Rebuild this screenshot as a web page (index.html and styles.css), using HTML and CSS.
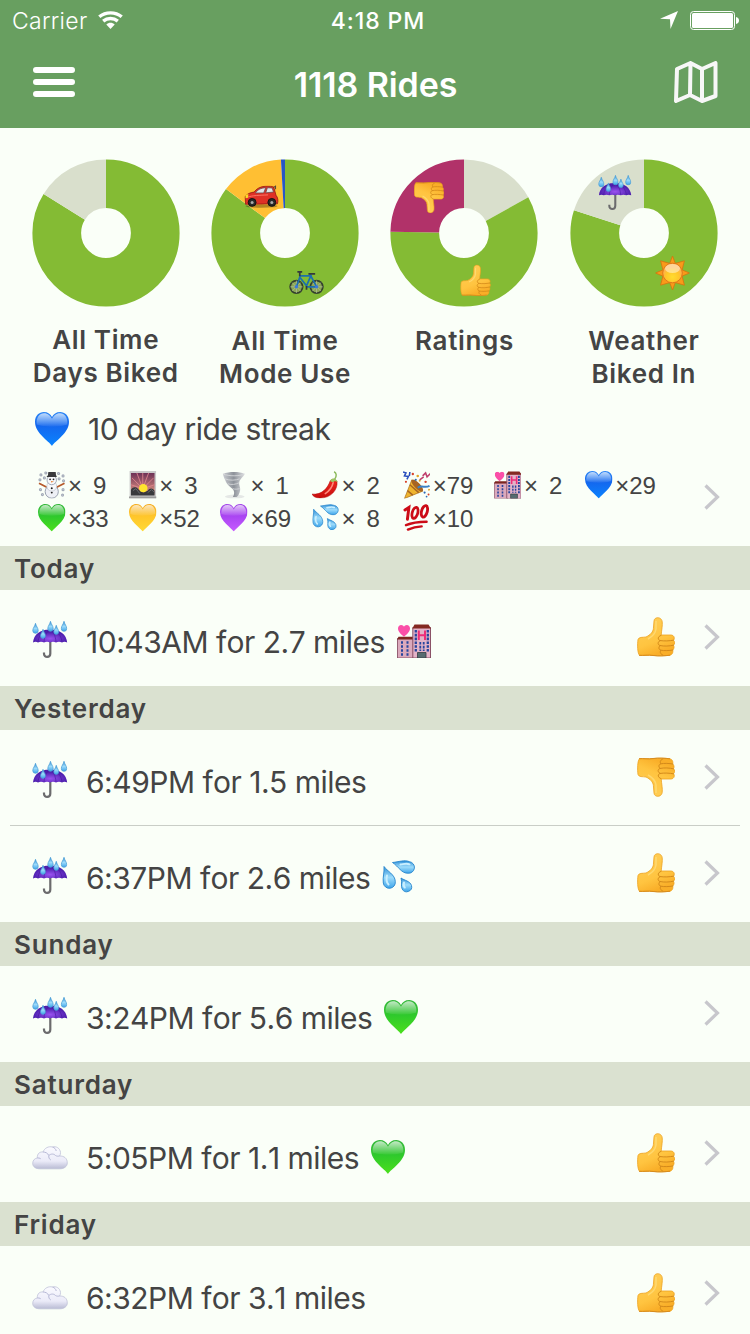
FILE: index.html
```html
<!DOCTYPE html>
<html lang="en">
<head>
<meta charset="utf-8">
<title>Rides</title>
<link rel="stylesheet" href="styles.css">
</head>
<body>
<svg class="defs" width="0" height="0" aria-hidden="true">
  <defs>
    <linearGradient id="blue" x2="0" y2="1"><stop offset="0" stop-color="#2c86f5"/><stop offset=".4" stop-color="#1467ee"/><stop offset="1" stop-color="#0a84ff"/></linearGradient>
    <linearGradient id="green" x2="0" y2="1"><stop offset="0" stop-color="#35b83c"/><stop offset=".45" stop-color="#2fc92c"/><stop offset="1" stop-color="#4be01c"/></linearGradient>
    <linearGradient id="yellow" x2="0" y2="1"><stop offset="0" stop-color="#f5ad23"/><stop offset=".45" stop-color="#ffc62a"/><stop offset="1" stop-color="#ffda35"/></linearGradient>
    <linearGradient id="purple" x2="0" y2="1"><stop offset="0" stop-color="#a44be8"/><stop offset=".45" stop-color="#aa45f2"/><stop offset="1" stop-color="#c65cff"/></linearGradient>
    <linearGradient id="gloss" x2="0" y2="1"><stop offset="0" stop-color="#fff" stop-opacity=".7"/><stop offset="1" stop-color="#fff" stop-opacity=".05"/></linearGradient>
    <linearGradient id="skin" x2=".4" y2="1"><stop offset="0" stop-color="#ffd05a"/><stop offset=".7" stop-color="#ffc440"/><stop offset="1" stop-color="#f9ae28"/></linearGradient>
    <radialGradient id="canopy" cy=".7"><stop offset="0" stop-color="#9a52f0"/><stop offset="1" stop-color="#4d1fae"/></radialGradient>
    <linearGradient id="water" x2="0" y2="1"><stop offset="0" stop-color="#2f8fd8"/><stop offset=".5" stop-color="#9ddcfb"/><stop offset="1" stop-color="#3fa5ea"/></linearGradient>
    <radialGradient id="sun" cy=".7"><stop offset="0" stop-color="#ffdc2e"/><stop offset=".7" stop-color="#ffc52a"/><stop offset="1" stop-color="#ffb347"/></radialGradient>
    <linearGradient id="cloud" x2="0" y2="1"><stop offset="0" stop-color="#fbfbff"/><stop offset=".65" stop-color="#ebebf8"/><stop offset="1" stop-color="#b9bbd4"/></linearGradient>
    <linearGradient id="funnel"><stop offset="0" stop-color="#c9ccd1"/><stop offset=".5" stop-color="#8d9299"/><stop offset="1" stop-color="#d9dbde"/></linearGradient>
    <linearGradient id="dusk" x2="0" y2="1"><stop offset="0" stop-color="#6d3156"/><stop offset="1" stop-color="#e79a85"/></linearGradient>
    <linearGradient id="chilired" x2="0" y2="1"><stop offset="0" stop-color="#ee2a20"/><stop offset="1" stop-color="#c80d0d"/></linearGradient>
  </defs>

  <symbol id="heart-shape" viewBox="0 0 34 34"><path d="M17 34C14 29 0 21.500 0 9.800 0 3.500 4.200 0 8.800 0c4 0 6.800 2 8.200 5C18.400 2 21.200 0 25.200 0 29.800 0 34 3.500 34 9.800 34 21.500 20 29 17 34z"/></symbol>
  <symbol id="heart-gloss" viewBox="0 0 34 34"><path fill="url(#gloss)" d="M1.800 12.500C.8 5.500 4.500 1.200 9 1.200c4 0 6.500 2.500 8 5.600 1.500-3.100 4-5.600 8-5.600 4.500 0 8.200 4.300 7.200 11.300-6 2.600-24.400 2.600-30.400 0z"/></symbol>
  <symbol id="heart-blue" viewBox="0 0 34 34"><use href="#heart-shape" fill="url(#blue)"/><use href="#heart-gloss"/></symbol>
  <symbol id="heart-green" viewBox="0 0 34 34"><use href="#heart-shape" fill="url(#green)"/><use href="#heart-gloss"/></symbol>
  <symbol id="heart-yellow" viewBox="0 0 34 34"><use href="#heart-shape" fill="url(#yellow)"/><use href="#heart-gloss"/></symbol>
  <symbol id="heart-purple" viewBox="0 0 34 34"><use href="#heart-shape" fill="url(#purple)"/><use href="#heart-gloss"/></symbol>

  <symbol id="drop" viewBox="0 0 8 13"><path d="M4 .4C4.700 4 7.200 5.800 7.200 9a3.200 3.200 0 0 1-6.400 0C.8 5.800 3.300 4 4 .4z" fill="url(#water)" stroke="#4b9fd6" stroke-width=".9"/></symbol>
  <symbol id="umbrella" viewBox="0 0 36 38">
    <path d="M18.300 19v13.500c0 4.600-6.300 4.400-6.300.3v-1.300" fill="none" stroke="#6b6b6d" stroke-width="2.200"/>
    <path d="M1 21.500C1.800 13.500 8 8.500 18 8.500s16.500 5 17.200 13c-1.800-1-3.500-1-5.200 0-2-1-4-1-6 0-2-1-4-1-6 0-2-1-4-1-6 0-2-1-4-1-6 0-1.700-1-3.300-1-5 0z" fill="url(#canopy)"/>
    <path d="M12 21C12.500 14 15 10.500 18 8.500c3 2 5.500 5.500 6 12.500M6 21c.5-5 3-9 8-12M30 21c-.5-5-3-9-8-12" fill="none" stroke="#43189b" stroke-width=".6"/>
    <use href="#drop" x="0" y="2" width="7" height="11"/><use href="#drop" x="15" y="0" width="7" height="11"/><use href="#drop" x="21" y="4" width="6.500" height="10"/><use href="#drop" x="28.500" y="0" width="7" height="11"/><use href="#drop" x="7.500" y="8" width="7" height="10"/>
  </symbol>

  <symbol id="thumb" viewBox="0 0 38 40">
    <path d="M1 22.500C1.800 19.800 5.500 20.500 9 20c4.500-2.200 7-5 7.400-8.500L17 4c.3-4.600 7.500-4.400 8.200.6.500 4-.6 8-1 13.400h9.800c3.600.2 3.900 4 2.500 5.200 1.600 1.600 1.500 3.800 0 5 1 1.800.6 3.700-.8 4.800.7 3-.8 5.200-4 5.400-5 .5-11 .6-15.500 0-5-.8-10 .5-13.400 0C.3 37 .3 27 1 22.500z" fill="url(#skin)" stroke="#eda21f" stroke-width=".8"/>
    <path d="M24 18.400c-3.500 1-3.500 4.400-.8 5.200-3 1.600-2.500 4.300 0 5-2 1.700-1.500 3.900.6 4.600-1.300 2.200 0 4.200 2 4.800M23.200 23.600c4 .6 9 .4 13.300-.4M23.200 28.600c4 .8 9 .6 13.300-.4M23.800 33.200c4 .7 8 .5 12-.2" fill="none" stroke="#d48a1a" stroke-width="1" stroke-linecap="round"/>
    <path d="M19 4v8c-.5 4-3.500 7.500-8 10" fill="none" stroke="#ffdf80" stroke-width="1.500" opacity=".7"/>
    <path d="M2 38.300c5 .3 9-.5 14 .2 6 .7 12 .3 17-.3" fill="none" stroke="#d78b1d" stroke-width="1"/>
  </symbol>
  <symbol id="thumb-down" viewBox="0 0 38 40"><use href="#thumb" width="38" height="40" transform="matrix(1 0 0 -1 0 40)"/></symbol>

  <symbol id="cloud-icon" viewBox="0 0 36 24">
    <path d="M8 22.800c-4 0-7.300-1.800-7.300-5.400 0-3.200 2.300-5.200 4.600-5.400C5 7.500 8 5.500 11 6c1.500-4 5.500-6 9.500-5 3.500-1 7.500 1 8 5.500 0 1.600-.3 2.500-.9 3.500 4.500-.2 7.700 2.400 7.700 6.800 0 4-3.500 6-7.500 6z" fill="url(#cloud)" stroke="#bfc1d8" stroke-width=".8"/>
    <path d="M11 6c2.500 0 4.800 1.200 5.800 3.500C19 7.500 22 7.700 23.500 9.500c1.500 1 3 .7 4.100.5M16.800 9.500c-.3 2 .5 3.700 2 4.500M5.300 12c1.200-.2 2.400 0 3.400.7M20.500 1c2 .6 3.500 2.200 3.700 4" fill="none" stroke="#b7b9d6" stroke-width="1"/>
  </symbol>

  <symbol id="hotel" viewBox="0 0 34 34">
    <path d="M.5 14.500h16V34H.5z" fill="#dba9bc" stroke="#7e4359" stroke-width=".8"/>
    <path d="M0 15.500l1.500-2.800h14.500v2.800z" fill="#7c2620"/>
    <path d="M15.800 3.500h17.700V34H15.800z" fill="#e3b3c8" stroke="#7e4359" stroke-width=".9"/>
    <path d="M15.300 4.500L17.500.5h14L34 4.500z" fill="#842a22"/>
    <path d="M4 18.500h2M9.500 18.500h2M4 22.500h2M9.500 22.500h2M4 26.500h2M9.500 26.500h2M4 30.500h2M9.500 30.500h2" stroke="#27459e" stroke-width="2.400"/>
    <path d="M18.800 6v22M30.800 6v22" stroke="#27459e" stroke-width="2.300" stroke-dasharray="2.600 1.200"/>
    <path d="M23.300 18v9M26.700 18v9" stroke="#27459e" stroke-width="1.800" stroke-dasharray="2.600 1.200"/>
    <path d="M21.800 6.500v9.500M28 6.500v9.500M21.800 11.200H28" stroke="#ee2e79" stroke-width="2"/>
    <path d="M20.500 28.500h8.500V34h-8.500z" fill="#566b70" stroke="#333e42" stroke-width=".8"/>
    <use href="#heart-shape" x="1" y="1" width="12" height="12" fill="#fa4fa8"/>
  </symbol>

  <symbol id="splash" viewBox="0 0 34 34">
    <g fill="url(#water)" stroke="#2585cc" stroke-width=".9">
      <path d="M2 6.500C5 11 13 14.500 13.300 21.500a6 6 0 0 1-12 1.500C.5 17 2.500 13 2 6.500z"/>
      <path d="M10.500 2.500c6-.5 12-3 17-.8a5.800 5.800 0 0 1-1.500 11.500C19.500 13.500 16.500 6.500 10.500 2.500z"/>
      <path d="M19 18c3.500 2.500 9 3 10.500 7.500a5 5 0 0 1-9.300 3.500C18.500 26 20.500 22.500 19 18z"/>
    </g>
    <path d="M5 15.500c-1 4-.5 7 1.500 9M18.500 4.500c3-.3 6-1.500 9-.2M22 22.500c-.5 2-.3 4 .8 5" stroke="#c9efff" stroke-width="2" fill="none" stroke-linecap="round"/>
  </symbol>

  <symbol id="car" viewBox="0 0 36 24">
    <ellipse cx="18" cy="22" rx="17" ry="1.700" fill="#000" opacity=".3"/>
    <path d="M1 20l-.4-8c1.500-3 5.500-4.500 9.500-5C12.500 3.500 17 1 22 .8c4-.2 7.500 0 9 .7l2.500 9c2 2 2.500 6 1.500 9z" fill="#df3026" stroke="#8d1711" stroke-width=".8"/>
    <path d="M11.500 8C14 4 18 2.500 22.500 2.300l-2.200 5.600zM24.300 2.400l5 .2 1.500 4.400-8.300.8z" fill="#dfe7ea" stroke="#69474a" stroke-width=".8"/>
    <path d="M3 12.500c5-2 13-2 22-2.500" stroke="#ff7667" fill="none"/>
    <path d="M31 2.500l2-2.500v4" fill="none" stroke="#413b3b"/>
    <path d="M1 10l3-1-.5 4-2.500.5z" fill="#f7de23"/>
    <g fill="#292929" stroke="#111"><circle cx="8" cy="18" r="4.200"/><circle cx="29" cy="18" r="4.200"/></g>
    <g fill="#aaa"><circle cx="8" cy="18" r="1.600"/><circle cx="29" cy="18" r="1.600"/></g>
  </symbol>

  <symbol id="bike" viewBox="0 0 36 26">
    <g fill="#8ba553" stroke="#33402e" stroke-width="1.800"><circle cx="7.500" cy="17" r="6.500"/><circle cx="28.500" cy="17" r="6.500"/></g>
    <path d="M7.500 10.500v13M1 17h13M3 12.500l9 9M12 12.500l-9 9M28.500 10.500v13M22 17h13M24 12.500l9 9M33 12.500l-9 9" stroke="#b7c3a5" stroke-width=".7"/>
    <path d="M7.500 17L11.500 5.500h11L18 16 11 7M22.500 5.500l6 11.500H18M22 4v3" fill="none" stroke="#1c6fae" stroke-width="1.800"/>
    <path d="M8.500 1.500h5M11 2v4M20 3.500h7M18 16v4" stroke="#353b3b" stroke-width="1.800"/>
    <g fill="#3b78d8"><circle cx="7.500" cy="17" r="1.800"/><circle cx="28.500" cy="17" r="1.800"/></g>
  </symbol>

  <symbol id="sun-icon" viewBox="0 0 34 34">
    <path d="M17 0l2.800 7.400L28.900 4.800 26.600 13.900 34 17l-7.400 3.100 2.300 9.100-9.100-2.600L17 34l-2.800-7.400-9.100 2.600 2.300-9.100L0 17l7.400-3.100-2.300-9.100 9.100 2.600z" fill="#f99a1a" stroke="#d8720e" stroke-width=".8"/>
    <circle cx="17" cy="17" r="9.800" fill="url(#sun)" stroke="#e0771a" stroke-width="1"/>
    <ellipse cx="17" cy="12.500" rx="7.500" ry="4.500" fill="#fff" opacity=".45"/>
  </symbol>

  <symbol id="snowman" viewBox="0 0 28 28">
    <g fill="none" stroke="#a3aab8" stroke-width="1.200"><circle cx="3" cy="4" r="1"/><circle cx="8" cy="2" r="1"/><circle cx="21" cy="2.500" r="1"/><circle cx="25.500" cy="5" r="1"/><circle cx="2" cy="9" r="1"/><circle cx="26" cy="10" r="1"/><circle cx="2.500" cy="19" r="1"/><circle cx="25.500" cy="19" r="1"/><circle cx="4.500" cy="24" r="1"/><circle cx="25" cy="24.500" r="1"/><circle cx="6.500" cy="7" r="1"/><circle cx="21.500" cy="8" r="1"/></g>
    <path d="M1 12.500l8 4M27 12.500l-8 4" stroke="#b6592a" stroke-width="1.800"/>
    <circle cx="14" cy="21" r="6.700" fill="#eef0f6" stroke="#8f97a8" stroke-width=".9"/>
    <circle cx="14" cy="15.500" r="5" fill="#f7f8fb" stroke="#b0b6c2" stroke-width=".6"/>
    <circle cx="14" cy="9.200" r="4.800" fill="#f7f8fb" stroke="#8f97a8" stroke-width=".8"/>
    <path d="M10.500 1h7.500l.5 4.500H10z" fill="#3a3a3c"/><path d="M9 5.500h10" stroke="#3a3a3c" stroke-width="1.200"/>
    <g fill="#222"><circle cx="12.300" cy="8.500" r=".9"/><circle cx="15.800" cy="8.500" r=".9"/><circle cx="14" cy="17.500" r="1"/><circle cx="14" cy="22" r="1"/></g>
    <path d="M13.300 10.300l3 .7-3 .7z" fill="#e87722"/>
  </symbol>

  <symbol id="sunrise" viewBox="0 0 28 28">
    <path d="M.6 0h27v28H.6z" fill="#c9c9c9"/><path d="M0 26h28v2H0z" fill="#9b9b9b"/>
    <path d="M2 2h24v22H2z" fill="url(#dusk)"/>
    <path d="M14 18L2 14M14 18L3 7M14 18L8 2M14 18V2M14 18l6-16M14 18L25 7M14 18l12-4" stroke="#e58a92" stroke-width=".8"/>
    <circle cx="14.500" cy="17.500" r="4.300" fill="#ffe52e"/>
    <path d="M2 19c2-3 5-3 7-1l3 3 3 1 4-2c2-3 5-3 7 0v5H2z" fill="#38393c"/><path d="M4 20l3-2 4 5M19 22l4-3 3 3" fill="none" stroke="#67686b"/>
  </symbol>

  <symbol id="tornado" viewBox="0 0 28 28">
    <ellipse cx="15" cy="26" rx="10" ry="2" fill="#d7d9da" opacity=".6"/>
    <path d="M3 3c6-2.500 17-2.500 22 0-1 3-4 4.500-5 7-1.500 4 1 6 .5 9.500-.5 3.500-2 5.500-3.500 7h-4c1-2 2-4 1-6.500-1.500-3-6-4.500-8-9C5 8 3.500 6 3 3z" fill="url(#funnel)"/>
    <path d="M3 3c6 2.500 17 2.500 22 0M5 8c5 2 11 1.500 15 0M8 13c4 1.500 8 .5 11.500-1M13 18c2 .8 5 .5 7 0" fill="none" stroke="#d5d7da" stroke-width=".9"/>
  </symbol>

  <symbol id="chili" viewBox="0 0 28 28">
    <path d="M18.500 10c2-2.500 6-2 7 1C26.500 19 19 28 8 27.500c-4 0-7-1.500-8-4C10 24.500 16 17.500 18.500 10z" fill="url(#chilired)" stroke="#b20c0c" stroke-width=".5"/>
    <path d="M21.500 12c-1 4.500-4 8.500-8 11" fill="none" stroke="#ff897c" stroke-width="1.600" stroke-linecap="round"/>
    <path d="M18.500 10.500c.5-4 6-4 7.800.7l-3-1-2 1.200z" fill="#9cc764"/><path d="M23 8.500C25.500 5 25 2 22.500.8" fill="none" stroke="#8dbb5d" stroke-width="1.500"/>
  </symbol>

  <symbol id="party" viewBox="0 0 28 28">
    <path d="M9 9l11 11.500L1.500 28z" fill="#efb52f" stroke="#a86b18" stroke-width=".7"/>
    <path d="M7 14l9 8M4.500 20l5.500 4.500" stroke="#a76522" stroke-width="1.500"/>
    <ellipse cx="14.500" cy="14.800" rx="3" ry="8" transform="rotate(-44 14.500 14.800)" fill="#a86422"/>
    <path d="M0 1l3 1-1.500 3 4 .5L4 8.500M7 1l-.5 4" fill="none" stroke="#294fbd" stroke-width="1.600"/>
    <path d="M20 5l3-3 1.500 4L28 2.500M17 9l4-3" fill="none" stroke="#bf3e6c" stroke-width="1.600"/>
    <path d="M15 17c4-3 8 1 12-2" fill="none" stroke="#3b83c6" stroke-width="2"/>
    <g fill="#d7432b"><circle cx="10" cy="3" r="1.200"/><circle cx="3" cy="11" r="1.100"/><circle cx="23" cy="11" r="1.200"/><circle cx="26" cy="24" r="1"/></g>
    <g fill="#e2a426"><circle cx="15" cy="5" r="1.300"/><circle cx="26.500" cy="19" r="1"/><circle cx="17" cy="10" r="1"/></g>
    <g fill="#2d69b8"><circle cx="13" cy="9" r="1.100"/><circle cx="22" cy="22" r="1.100"/><circle cx="24" cy="26" r=".9"/></g>
  </symbol>

  <symbol id="hundred" viewBox="0 0 28 28">
    <g fill="none" stroke="#cc0c17" stroke-linecap="round">
      <path d="M2 6l4-2.500L4.500 15.500" stroke-width="3"/>
      <ellipse cx="12.200" cy="9" rx="2.800" ry="5.800" transform="rotate(16 12.200 9)" stroke-width="2.800"/>
      <ellipse cx="21.800" cy="7.500" rx="2.900" ry="6" transform="rotate(16 21.800 7.500)" stroke-width="2.900"/>
      <path d="M3 21.500C10 18.500 17 18 24 18M5 26c5-2.200 9-3 14-3.200" stroke-width="2.500"/>
    </g>
  </symbol>

  <symbol id="chevron" viewBox="0 0 16 26"><path d="M1.500 1.500L13.500 13l-12 11.500" fill="none" stroke="#c7c7cc" stroke-width="3.200"/></symbol>
</svg>

<header class="navbar">
  <div class="status">
    <div class="status-left"><span class="carrier">Carrier</span>
      <svg class="wifi" viewBox="0 0 25 18"><g fill="none" stroke="#fff" stroke-width="3.400"><path d="M1.300 5.800c6.300-5.300 16.100-5.300 22.400 0"/><path d="M5.200 10.100c4.200-3.500 10.400-3.500 14.600 0"/></g><path d="M8.300 13.400c2.400-2.100 6-2.100 8.400 0L12.500 18z" fill="#fff"/></svg>
    </div>
    <div class="clock">4:18 PM</div>
    <div class="status-right">
      <svg class="locate" viewBox="0 0 18 18"><path d="M18 0L10.500 18 10 8.200 0 7.800z" fill="#fff"/></svg>
      <svg class="battery" viewBox="0 0 49 19"><rect x=".5" y=".5" width="44" height="18" rx="3" fill="none" stroke="#fff"/><rect x="2" y="2" width="41" height="15" rx="1.500" fill="#fff"/><path d="M46 6c4 .5 4 6.500 0 7z" fill="#fff"/></svg>
    </div>
  </div>
  <div class="titlebar">
    <svg class="menu" viewBox="0 0 42 30"><path d="M3 3h36M3 15h36M3 27h36" stroke="#fff" stroke-width="6" stroke-linecap="round"/></svg>
    <h1 class="title">1118 Rides</h1>
    <svg class="map" viewBox="0 0 44 42"><path d="M3 8l13.500-6L28 8l13.500-6v33L28 40l-12-6L2 40zM16.500 2L16 34M28 8v32" fill="none" stroke="#f7f7f7" stroke-width="4" stroke-linejoin="round"/></svg>
  </div>
</header>

<section class="charts">
  <div class="chart">
    <div class="donut"><svg viewBox="0 0 148 148"><g class="ring"><circle class="c-green" pathLength="100" cx="74" cy="74" r="49.250" stroke-dasharray="83.900 100"/><circle class="c-grey" pathLength="100" cx="74" cy="74" r="49.250" stroke-dasharray="16.100 100" stroke-dashoffset="-83.900"/></g></svg></div>
    <div class="label label-first">All Time<br>Days Biked</div>
  </div>
  <div class="chart">
    <div class="donut"><svg viewBox="0 0 148 148"><g class="ring"><circle class="c-green" pathLength="100" cx="74" cy="74" r="49.250" stroke-dasharray="85.200 100"/><circle class="c-orange" pathLength="100" cx="74" cy="74" r="49.250" stroke-dasharray="13.900 100" stroke-dashoffset="-85.200"/><circle class="c-blue" pathLength="100" cx="74" cy="74" r="49.250" stroke-dasharray=".9 100" stroke-dashoffset="-99.100"/></g><use href="#car" x="33" y="26.500" width="35" height="22.500"/><use href="#bike" x="78" y="111.500" width="35" height="25"/></svg></div>
    <div class="label">All Time<br>Mode Use</div>
  </div>
  <div class="chart">
    <div class="donut"><svg viewBox="0 0 148 148"><g class="ring"><circle class="c-grey" pathLength="100" cx="74" cy="74" r="49.250" stroke-dasharray="16.900 100"/><circle class="c-green" pathLength="100" cx="74" cy="74" r="49.250" stroke-dasharray="58.400 100" stroke-dashoffset="-16.900"/><circle class="c-plum" pathLength="100" cx="74" cy="74" r="49.250" stroke-dasharray="24.700 100" stroke-dashoffset="-75.300"/></g><use href="#thumb-down" x="23.500" y="22.500" width="31" height="32"/><use href="#thumb" x="70" y="105.500" width="31" height="32"/></svg></div>
    <div class="label">Ratings</div>
  </div>
  <div class="chart">
    <div class="donut"><svg viewBox="0 0 148 148"><g class="ring"><circle class="c-green" pathLength="100" cx="74" cy="74" r="49.250" stroke-dasharray="80 100"/><circle class="c-grey" pathLength="100" cx="74" cy="74" r="49.250" stroke-dasharray="20 100" stroke-dashoffset="-80"/></g><use href="#umbrella" x="28" y="16" width="34" height="36"/><use href="#sun-icon" x="85.500" y="97" width="34" height="34"/></svg></div>
    <div class="label">Weather<br>Biked In</div>
  </div>
</section>

<section class="summary">
  <div class="streak"><svg class="streak-heart"><use href="#heart-blue"/></svg><span>10 day ride streak</span></div>
  <div class="badge-row">
    <div class="badges">
      <div class="badge"><svg><use href="#snowman"/></svg><span>×</span><b class="single">9</b></div>
      <div class="badge"><svg><use href="#sunrise"/></svg><span>×</span><b class="single">3</b></div>
      <div class="badge"><svg><use href="#tornado"/></svg><span>×</span><b class="single">1</b></div>
      <div class="badge"><svg><use href="#chili"/></svg><span>×</span><b class="single">2</b></div>
      <div class="badge"><svg><use href="#party"/></svg><span>×</span><b>79</b></div>
      <div class="badge"><svg><use href="#hotel"/></svg><span>×</span><b class="single">2</b></div>
      <div class="badge"><svg><use href="#heart-blue"/></svg><span>×</span><b>29</b></div>
      <div class="badge"><svg><use href="#heart-green"/></svg><span>×</span><b>33</b></div>
      <div class="badge"><svg><use href="#heart-yellow"/></svg><span>×</span><b>52</b></div>
      <div class="badge"><svg><use href="#heart-purple"/></svg><span>×</span><b>69</b></div>
      <div class="badge"><svg><use href="#splash"/></svg><span>×</span><b class="single">8</b></div>
      <div class="badge"><svg><use href="#hundred"/></svg><span>×</span><b>10</b></div>
    </div>
    <svg class="chevron"><use href="#chevron"/></svg>
  </div>
</section>

<main class="rides">
  <h2 class="day">Today</h2>
  <div class="ride"><svg class="weather"><use href="#umbrella"/></svg><span class="text">10:43AM for 2.7 miles</span><svg class="tag"><use href="#hotel"/></svg><svg class="thumb"><use href="#thumb"/></svg><svg class="chevron"><use href="#chevron"/></svg></div>
  <h2 class="day">Yesterday</h2>
  <div class="ride divided"><svg class="weather"><use href="#umbrella"/></svg><span class="text">6:49PM for 1.5 miles</span><svg class="thumb"><use href="#thumb-down"/></svg><svg class="chevron"><use href="#chevron"/></svg></div>
  <div class="ride"><svg class="weather"><use href="#umbrella"/></svg><span class="text">6:37PM for 2.6 miles</span><svg class="tag"><use href="#splash"/></svg><svg class="thumb"><use href="#thumb"/></svg><svg class="chevron"><use href="#chevron"/></svg></div>
  <h2 class="day">Sunday</h2>
  <div class="ride"><svg class="weather"><use href="#umbrella"/></svg><span class="text">3:24PM for 5.6 miles</span><svg class="tag"><use href="#heart-green"/></svg><svg class="chevron"><use href="#chevron"/></svg></div>
  <h2 class="day">Saturday</h2>
  <div class="ride"><svg class="weather cloudy"><use href="#cloud-icon"/></svg><span class="text">5:05PM for 1.1 miles</span><svg class="tag"><use href="#heart-green"/></svg><svg class="thumb"><use href="#thumb"/></svg><svg class="chevron"><use href="#chevron"/></svg></div>
  <h2 class="day">Friday</h2>
  <div class="ride"><svg class="weather cloudy"><use href="#cloud-icon"/></svg><span class="text">6:32PM for 3.1 miles</span><svg class="thumb"><use href="#thumb"/></svg><svg class="chevron"><use href="#chevron"/></svg></div>
</main>
</body>
</html>
```
FILE: styles.css
```css
* { box-sizing: border-box; }
html { height: 1334px; overflow: hidden; }
body {
  margin: 0;
  width: 750px;
  height: 1334px;
  overflow: hidden;
  background: #fafff8;
  color: #444;
  font-family: Inter, "Liberation Sans", sans-serif;
}
svg { display: block; flex: none; }
.defs { position: absolute; }

.navbar { height: 128px; background: #689f60; color: #fff; }
.status {
  display: grid;
  grid-template-columns: 1fr auto 1fr;
  align-items: center;
  height: 40px;
  padding: 0 11px 0 12px;
  font-size: 23px;
}
.status-left { display: flex; align-items: center; gap: 11px; height: 40px; }
.carrier { letter-spacing: 0.3px; margin-top: 2px; font-weight: 300; }
.wifi { width: 25px; height: 18px; }
.clock { font-weight: 500; letter-spacing: 0.9px; margin: 2px 0 0 5px; }
.status-right { display: flex; justify-content: flex-end; align-items: center; gap: 12px; }
.locate { width: 18px; height: 18px; }
.battery { width: 49px; height: 19px; }
.titlebar {
  display: grid;
  grid-template-columns: 44px 1fr 44px;
  align-items: center;
  height: 84px;
  padding: 0 32px 0 33px;
}
.menu { width: 42px; height: 30px; }
.map { width: 44px; height: 42px; }
.title { margin: 5px 0 0; text-align: center; font-size: 34px; font-weight: 600; line-height: 40px; font-kerning: none; letter-spacing: -0.1px; }

.charts {
  display: grid;
  grid-template-columns: repeat(4, 179.4px);
  height: 264px;
  padding: 31px 16px 0;
}
.chart { display: flex; flex-direction: column; align-items: center; }
.donut, .donut svg { width: 148px; height: 148px; }
.ring { transform: rotate(-90deg); transform-origin: 74px 74px; fill: none; stroke-width: 48.700px; }
.c-green { stroke: #84bb34; }
.c-grey { stroke: #d9dfcc; }
.c-orange { stroke: #ffbf33; }
.c-blue { stroke: #2856c5; }
.c-plum { stroke: #b13269; }
.label {
  margin-top: 17px;
  text-align: center;
  white-space: nowrap;
  font-size: 26px;
  font-weight: 600;
  line-height: 33px;
  letter-spacing: 0.65px;
}
.label-first { margin-top: 16px; }

.summary { height: 154px; padding-top: 15px; }
.streak { display: flex; align-items: center; gap: 19px; height: 44px; padding-left: 35px; font-size: 30px; letter-spacing: -0.45px; }
.streak-heart { width: 34px; height: 34px; }
.badge-row { display: flex; align-items: center; margin-top: 18px; height: 66px; padding: 0 30px 0 38px; }
.badges { display: grid; grid-template-columns: repeat(7, 91.2px); grid-auto-rows: 33px; width: 666px; }
.badge { display: flex; align-items: center; font: 24px/33px "Liberation Sans", sans-serif; }
.badge svg { width: 27.500px; height: 27.500px; margin: -1px 2.500px 0 0; }
.badge b { font-weight: 400; }
.badge .single { margin-left: 11px; }
.chevron { width: 16px; height: 26px; }
.badge-row .chevron { margin-top: -10px; }

.day {
  margin: 0;
  height: 44px;
  padding: 1px 0 0 14px;
  background: #dae1d0;
  font-size: 26px;
  font-weight: 600;
  line-height: 44px;
  letter-spacing: 0.8px;
}
.ride { display: flex; align-items: center; height: 96px; padding: 0 30px 2px 32px; }
.divided { background: linear-gradient(#c9cec7, #c9cec7) 10px 95px / 730px 1px no-repeat; }
.weather { width: 36px; height: 38px; margin-top: 6px; }
.cloudy { height: 24px; margin-top: 9px; }
.text { margin: 10px 0 0 18px; font-size: 30px; line-height: 36px; white-space: nowrap; letter-spacing: -0.5px; font-kerning: none; }
.tag { width: 34px; height: 34px; margin: 8px 0 0 12px; }
.thumb { width: 38px; height: 40px; margin-left: auto; margin-right: 29px; }
.ride > .text + .chevron, .ride > .tag + .chevron { margin-left: auto; }
```
